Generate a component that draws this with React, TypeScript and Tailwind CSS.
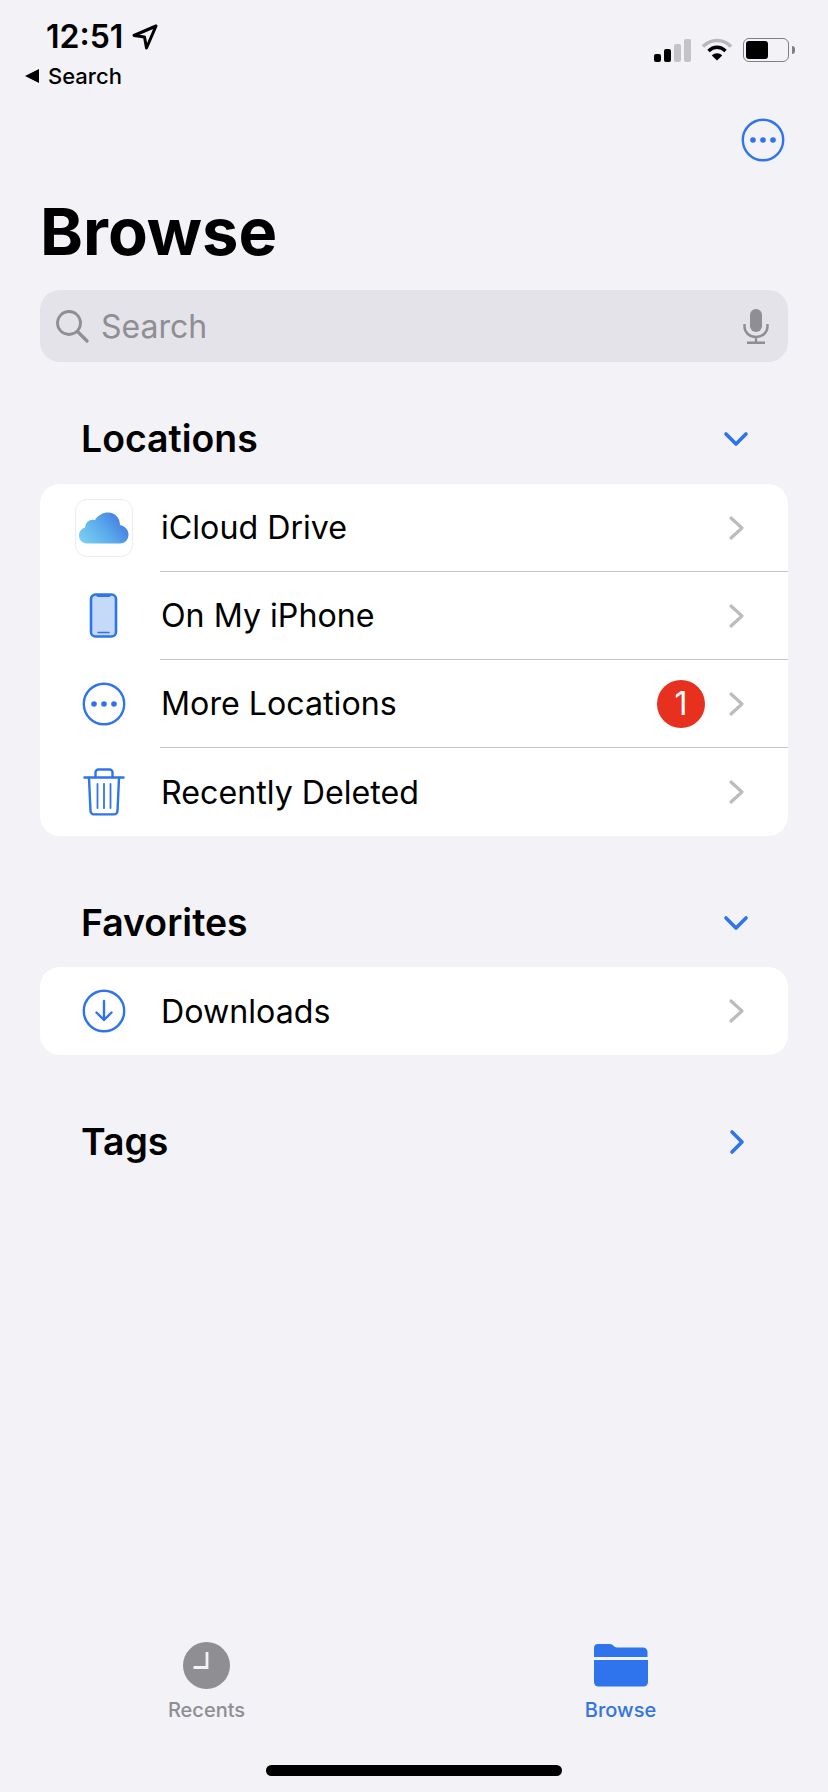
import type { ReactNode } from "react";

const blue = "#2f74ed";

function Chevron() {
  return (
    <svg width="18" height="26" viewBox="0 0 18 26" fill="none" className="shrink-0">
      <path d="M3 3l11 10L3 23" stroke="#bcbcc0" strokeWidth="3.2" strokeLinecap="round" strokeLinejoin="round" />
    </svg>
  );
}

function CloudIcon() {
  return (
    <div className="flex h-[58px] w-[58px] items-center justify-center rounded-[12px] border border-[#ececef] bg-white">
      <svg width="50" height="32" viewBox="0 0 50 32">
        <defs>
          <linearGradient id="cloud" x1="0" y1="0.75" x2="1" y2="0.25">
            <stop offset="0" stopColor="#78cdf0" />
            <stop offset="0.5" stopColor="#5aa9ea" />
            <stop offset="1" stopColor="#3f74e0" />
          </linearGradient>
        </defs>
        <path
          d="M8 31.5C3 31.500 0 27.500 0 23.500 0 19 3 16.500 6 15.500 6.500 10 11 6.500 16 8 19 3 24 .5 29 .5 36 .5 41 6 41 13c5 1 8.500 5 8.500 9.500 0 5-3.500 9-8.500 9z"
          fill="url(#cloud)"
        />
      </svg>
    </div>
  );
}

function PhoneIcon() {
  return (
    <svg width="30" height="46" viewBox="0 0 30 46" fill="none">
      <rect x="2" y="1.5" width="25" height="42" rx="4.5" fill="#c4daf8" stroke={blue} strokeWidth="2.6" />
      <path d="M9 2.5h11" stroke={blue} strokeWidth="3" strokeLinecap="round" />
      <path d="M9 39.5h11" stroke={blue} strokeWidth="1.6" strokeLinecap="round" />
    </svg>
  );
}

function MoreIcon({ size = 44 }: { size?: number }) {
  return (
    <svg width={size} height={size} viewBox="0 0 44 44" fill="none">
      <circle cx="22" cy="22" r="20.2" stroke={blue} strokeWidth="2.4" />
      <circle cx="12" cy="22" r="2.8" fill={blue} />
      <circle cx="22" cy="22" r="2.8" fill={blue} />
      <circle cx="32" cy="22" r="2.8" fill={blue} />
    </svg>
  );
}

function TrashIcon() {
  return (
    <svg width="42" height="48" viewBox="0 0 42 48" fill="none" stroke={blue} strokeWidth="2.4" strokeLinecap="round" strokeLinejoin="round">
      <path d="M1.5 9.5h39" />
      <path d="M12.5 9V4.5a3 3 0 0 1 3-3h11a3 3 0 0 1 3 3V9" />
      <path d="M6 10l1.5 33a3.5 3.5 0 0 0 3.5 3.4h20a3.5 3.5 0 0 0 3.5-3.4L36 10" />
      <path d="M14.5 16v24M21 16v24M27.5 16v24" strokeWidth="1.8" />
    </svg>
  );
}

function DownloadIcon() {
  return (
    <svg width="44" height="44" viewBox="0 0 44 44" fill="none" stroke={blue} strokeWidth="2.4" strokeLinecap="round" strokeLinejoin="round">
      <circle cx="22" cy="22" r="20.2" />
      <path d="M22 12v19M14.5 23.5 22 31l7.5-7.5" />
    </svg>
  );
}

type Row = { label: string; icon: ReactNode; badge?: number };

const locations: Row[] = [
  { label: "iCloud Drive", icon: <CloudIcon /> },
  { label: "On My iPhone", icon: <PhoneIcon /> },
  { label: "More Locations", icon: <MoreIcon />, badge: 1 },
  { label: "Recently Deleted", icon: <TrashIcon /> },
];

const favorites: Row[] = [{ label: "Downloads", icon: <DownloadIcon /> }];

function ListCard({ rows }: { rows: Row[] }) {
  return (
    <div className="mx-10 overflow-hidden rounded-[20px] bg-white">
      {rows.map((row, i) => (
        <div key={row.label} className="flex h-[88px] items-stretch">
          <div className="flex w-[120px] shrink-0 items-center justify-center pl-[8px]">{row.icon}</div>
          <div className={`flex flex-1 items-center pr-[42px] ${i < rows.length - 1 ? "border-b-[1.5px] border-[#c6c6c8]" : ""}`}>
            <span className="flex-1 pt-[2px] pl-[1px] text-[32.2px] text-black">{row.label}</span>
            {row.badge !== undefined && (
              <span className="mr-[23px] flex h-12 w-12 items-center justify-center rounded-full bg-[#e8301f] text-[32px] text-white">
                {row.badge}
              </span>
            )}
            <Chevron />
          </div>
        </div>
      ))}
    </div>
  );
}

function SectionHeader({ title, open }: { title: string; open: boolean }) {
  return (
    <div className="flex h-[44px] items-center justify-between pr-[79px] pl-[81px]">
      <h2 className="text-[37.4px] font-semibold text-black">{title}</h2>
      {open ? (
        <svg width="26" height="16" viewBox="0 0 26 16" fill="none">
          <path d="M3 3l10 10L23 3" stroke={blue} strokeWidth="3.6" strokeLinecap="round" strokeLinejoin="round" />
        </svg>
      ) : (
        <svg width="26" height="26" viewBox="0 0 26 26" fill="none">
          <path d="M9 3l10 10L9 23" stroke={blue} strokeWidth="3.6" strokeLinecap="round" strokeLinejoin="round" />
        </svg>
      )}
    </div>
  );
}

function StatusBar() {
  return (
    <div className="flex h-[118px] items-start justify-between">
      <div className="flex flex-col">
        <div className="mt-[20px] ml-[46px] flex h-[34px] items-center gap-[9px] text-[32px] leading-none font-semibold text-black">
          12:51
          <svg width="26" height="26" viewBox="0 0 26 26" fill="none">
            <path d="M24 2 2 11.5l10.5 1.5L14.5 24z" stroke="#000" strokeWidth="3" strokeLinejoin="round" />
          </svg>
        </div>
        <div className="mt-[10px] ml-[25px] flex h-[24px] items-center gap-[9px] text-[22px] leading-none font-medium text-black">
          <span className="h-0 w-0 border-y-[7px] border-r-[14px] border-y-transparent border-r-black" />
          Search
        </div>
      </div>
      <div className="mt-[38px] mr-[33px] flex items-center">
        <div className="flex items-end gap-[3px]">
          <span className="h-[8px] w-[7px] rounded-[2px] bg-black" />
          <span className="h-[13px] w-[7px] rounded-[2px] bg-black" />
          <span className="h-[18px] w-[7px] rounded-[2px] bg-[#c4c4c6]" />
          <span className="h-[23px] w-[7px] rounded-[2px] bg-[#c4c4c6]" />
        </div>
        <svg width="32" height="24" viewBox="0 0 32 24" fill="none" className="mr-[10px] ml-[10px]">
          <path d="M2 8.5C10 .5 22 .5 30 8.5" stroke="#b8b8ba" strokeWidth="3.6" />
          <path d="M7.5 13c5-5 12-5 17 0" stroke="#000" strokeWidth="3.4" />
          <path d="M16 22.5 10.8 17.4c3-2.8 7.4-2.8 10.4 0z" fill="#000" />
        </svg>
        <div className="flex items-center gap-[3px]">
          <div className="flex h-[24px] w-[46px] items-center rounded-[6px] border-[1.5px] border-[#808084] p-[2px]">
            <div className="h-full w-[22px] rounded-[3px] bg-black" />
          </div>
          <span className="h-[8px] w-[3px] rounded-r-full bg-[#808084]" />
        </div>
      </div>
    </div>
  );
}

export default function App() {
  return (
    <main
      className="flex h-[1792px] w-[828px] flex-col overflow-hidden bg-[#f2f2f7]"
      style={{ fontFamily: "Inter, 'Liberation Sans', sans-serif" }}
    >
      <StatusBar />

      <div className="flex h-[44px] justify-end pr-[43px]">
        <MoreIcon />
      </div>

      <h1 className="mt-[30px] ml-[40px] text-[65px] leading-[80px] font-bold text-black">Browse</h1>

      <div className="mx-10 mt-[18px] flex h-[72px] items-center rounded-[20px] bg-[#e3e3e9] pr-[18px] pl-[15px]">
        <svg width="34" height="34" viewBox="0 0 34 34" fill="none" stroke="#8e8e93" strokeWidth="2.8" strokeLinecap="round">
          <circle cx="14" cy="14" r="11.5" />
          <path d="M22.5 22.5 32 32" strokeWidth="3.2" />
        </svg>
        <span className="ml-[12px] flex-1 pt-[1px] text-[32px] text-[#8e8e93]">Search</span>
        <svg width="26" height="36" viewBox="0 0 26 36" fill="none" className="mr-[1px]">
          <rect x="7" y="1" width="12" height="23" rx="6" fill="#8e8e93" />
          <path d="M1.5 16v2.5c0 6 5 10.5 11.5 10.5s11.500-4.500 11.500-10.500V16M13 29v5.500M4 34.800h18" stroke="#8e8e93" strokeWidth="2.400" />
        </svg>
      </div>

      <div className="mt-[55px]">
        <SectionHeader title="Locations" open />
      </div>
      <div className="mt-[23px]">
        <ListCard rows={locations} />
      </div>

      <div className="mt-[65px]">
        <SectionHeader title="Favorites" open />
      </div>
      <div className="mt-[22px]">
        <ListCard rows={favorites} />
      </div>

      <div className="mt-[65px]">
        <SectionHeader title="Tags" open={false} />
      </div>

      <div className="mt-auto flex justify-between pr-[154px] pl-[153px]">
        <div className="flex w-[107px] flex-col items-center">
          <svg width="47" height="47" viewBox="0 0 47 47">
            <circle cx="23.500" cy="23.500" r="23.500" fill="#8e8e93" />
            <path d="M24 10v15.500H10.500" stroke="#f2f2f7" strokeWidth="2.800" fill="none" />
          </svg>
          <span className="mt-[9px] text-[20px] leading-[24px] font-medium text-[#8e8e93]">Recents</span>
        </div>
        <div className="flex w-[107px] flex-col items-center">
          <svg width="54" height="44" viewBox="0 0 54 44" className="mt-[1px]">
            <path d="M0 14V5a4 4 0 0 1 4-4h12c3 0 4 3.500 7 3.500h26a4.500 4.500 0 0 1 4.500 4.500v5z" fill={blue} />
            <path d="M0 17h54v22a4.500 4.500 0 0 1-4.500 4.500H4.500A4.500 4.500 0 0 1 0 39z" fill={blue} />
          </svg>
          <span className="mt-[11px] text-[20px] leading-[24px] font-medium text-[#3274e0]">Browse</span>
        </div>
      </div>

      <div className="mx-auto mt-[43px] mb-[16px] h-[11px] w-[296px] rounded-full bg-black" />
    </main>
  );
}
